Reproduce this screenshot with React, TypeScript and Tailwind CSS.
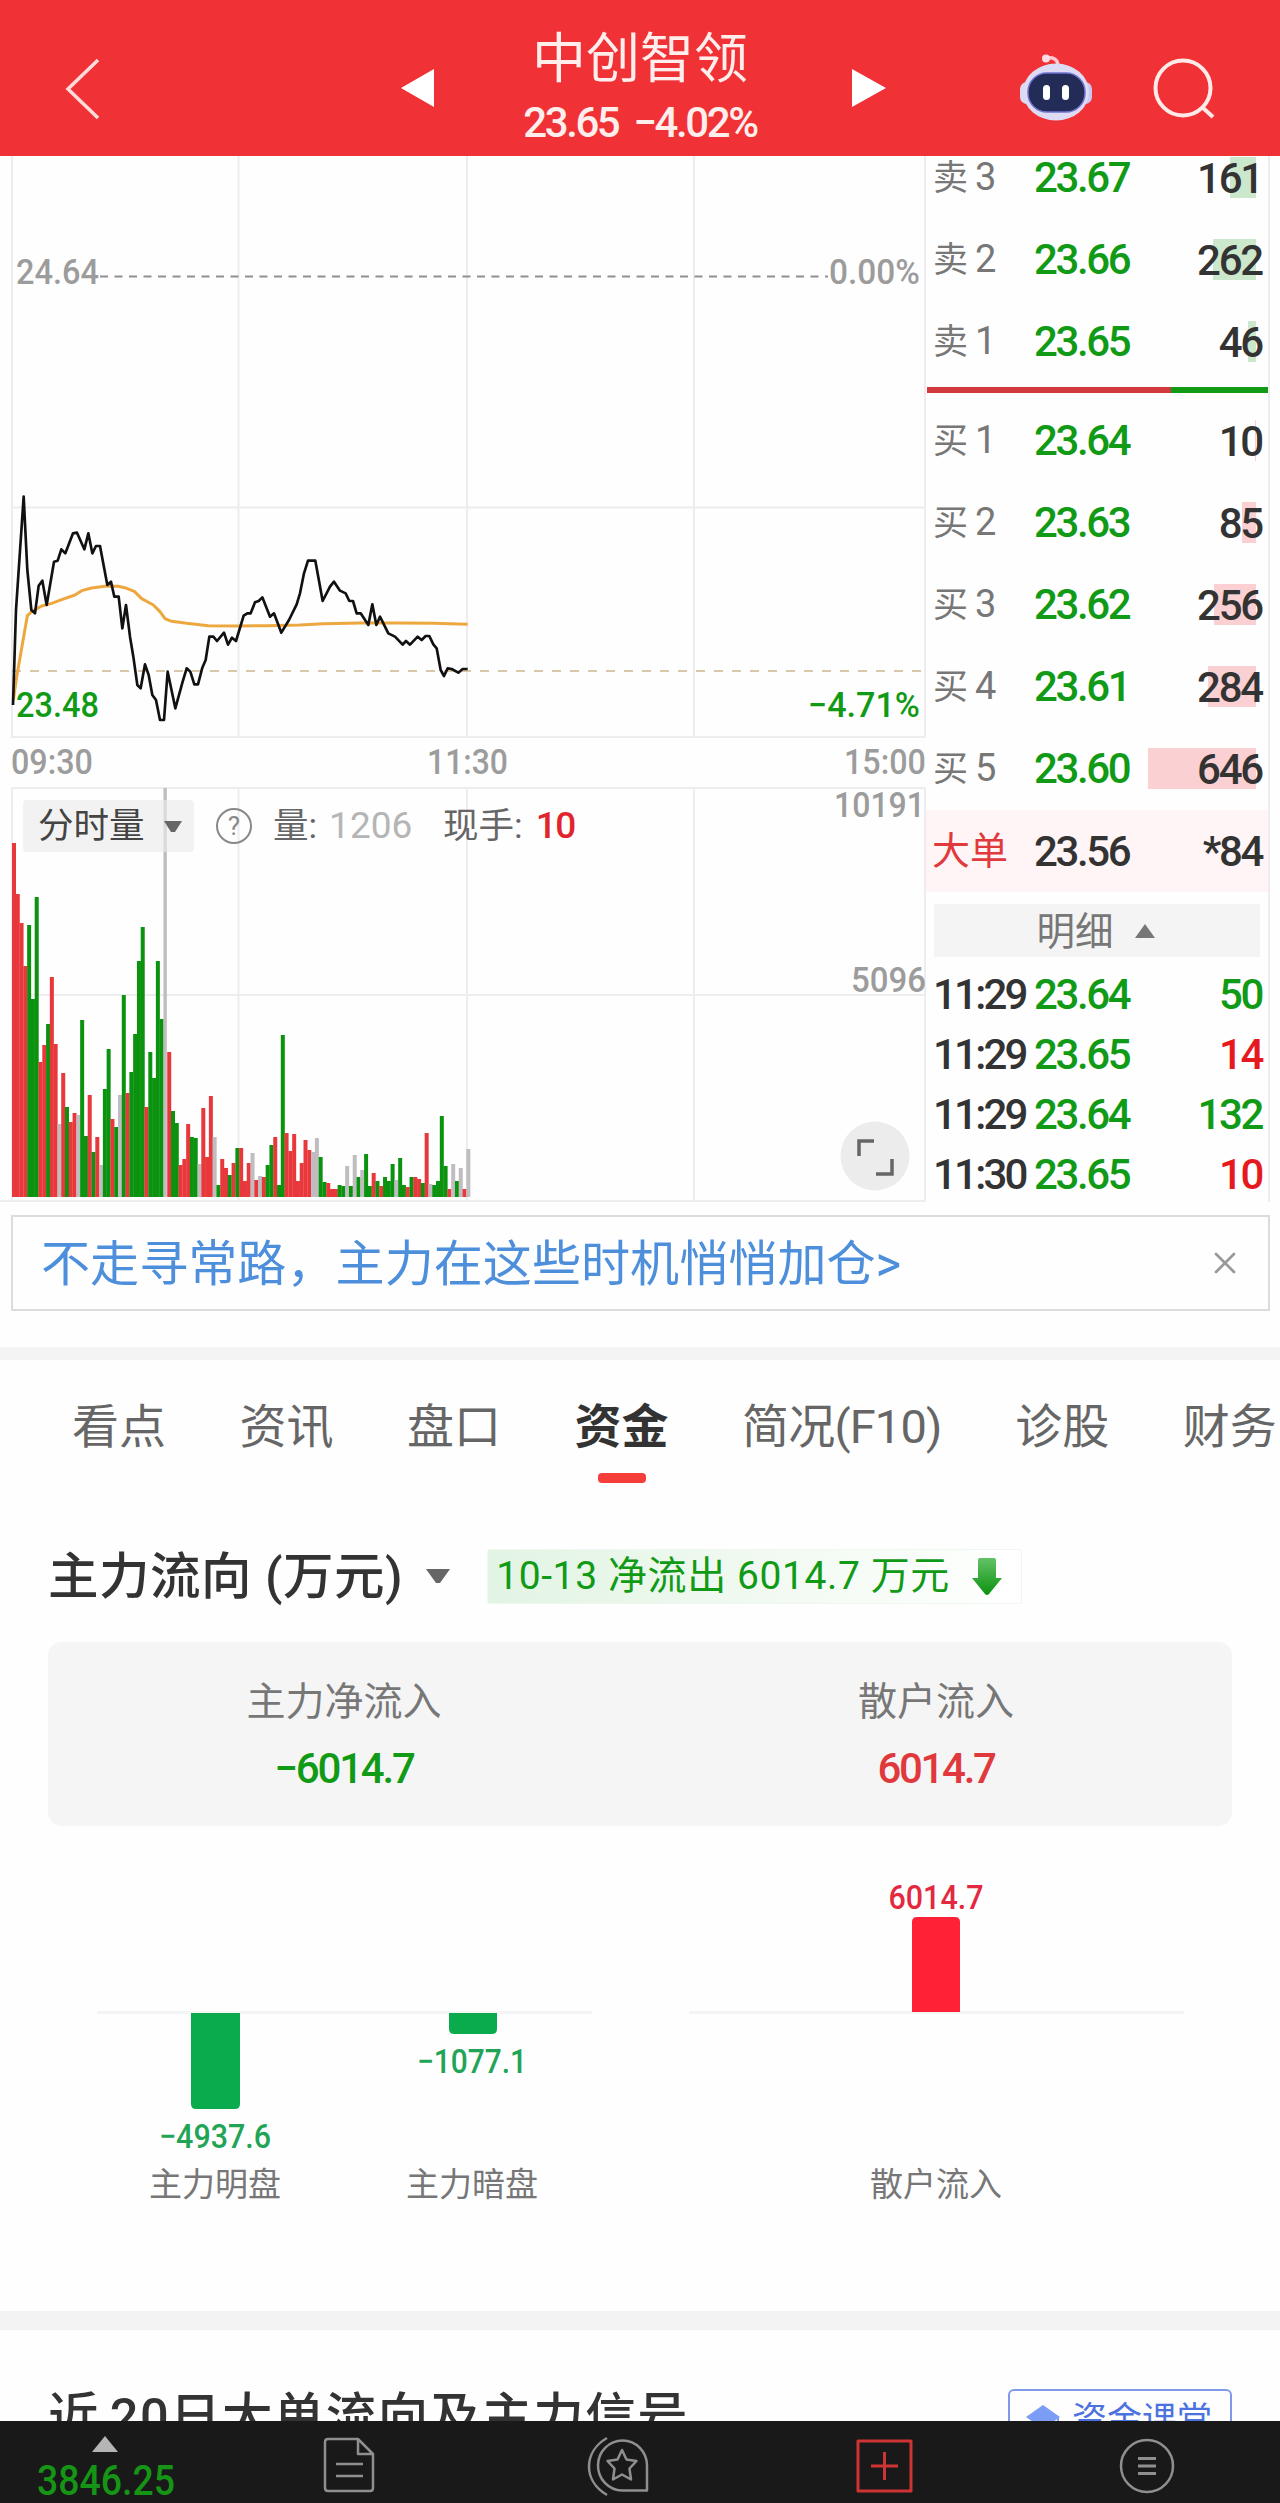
import { clsx } from "clsx"
import { X } from "lucide-react"

interface Level {
  label: string
  price: string
  volume: string
  depth: number
}

interface Tick {
  time: string
  price: string
  volume: string
  up: boolean
}

const sells: Level[] = [
  { label: "卖", price: "23.67", volume: "161", depth: 26 },
  { label: "卖", price: "23.66", volume: "262", depth: 43 },
  { label: "卖", price: "23.65", volume: "46", depth: 8 },
]

const buys: Level[] = [
  { label: "买", price: "23.64", volume: "10", depth: 1 },
  { label: "买", price: "23.63", volume: "85", depth: 14 },
  { label: "买", price: "23.62", volume: "256", depth: 42 },
  { label: "买", price: "23.61", volume: "284", depth: 48 },
  { label: "买", price: "23.60", volume: "646", depth: 108 },
]

const ticks: Tick[] = [
  { time: "11:29", price: "23.64", volume: "50", up: false },
  { time: "11:29", price: "23.65", volume: "14", up: true },
  { time: "11:29", price: "23.64", volume: "132", up: false },
  { time: "11:30", price: "23.65", volume: "10", up: true },
]

const tabs = ["看点", "资讯", "盘口", "资金", "简况(F10)", "诊股", "财务"]

// r = up, g = down, n = unchanged; the number is the bar height
const volumes =
  "r354 r303 r274 r231 g272 g198 g300 r135 r152 g173 r220 r153 n73 r124 g90 r75 r84 n82 g177 g61 r102 g45 r60 n32 " +
  "g108 g148 r78 g70 n102 g202 r104 g125 g163 g236 g270 r90 g145 g119 g236 g178 n409 r145 g86 g74 r32 r38 r73 g60 " +
  "g59 n33 r89 r40 r101 n60 g12 r38 r29 g22 r34 g49 r49 r16 r34 n44 r17 n21 r20 g32 g52 r60 g12 g162 r64 r46 r63 " +
  "r16 r34 r57 r47 n45 n59 g40 g15 r14 r8 r8 g12 g11 n31 g11 n42 g20 n27 g43 g11 r24 g16 r11 g20 g16 g33 n17 g39 " +
  "g12 r10 g20 r20 r18 g14 r64 n13 g12 g16 g81 g31 r8 n33 g16 n29 r8 n48"

const volumeColors: Record<string, string> = { r: "#e8383b", g: "#0b930f", n: "#bfbdbf" }

const pricePoints =
  "39,705 48,420 71,80 82,300 94,420 105,430 116,347 127,332 140,405 162,275 173,272 184,238 196,250 219,190 231,188 " +
  "253,238 265,190 277,250 288,228 300,228 322,345 333,335 343,380 356,380 367,475 378,405 390,500 400,560 412,645 " +
  "422,655 435,583 446,615 457,675 468,690 480,750 492,750 503,605 526,715 548,635 560,595 571,605 583,643 594,643 " +
  "607,593 617,570 628,500 640,500 651,513 672,488 684,524 696,503 708,513 731,437 742,430 752,430 765,397 776,393 " +
  "787,382 810,440 822,430 844,488 867,450 890,403 900,370 912,310 924,272 946,272 968,393 990,350 1002,335 1020,362 " +
  "1037,370 1048,393 1059,393 1070,430 1082,430 1105,465 1117,403 1129,465 1140,440 1165,490 1185,500 1208,524 " +
  "1218,513 1230,524 1253,500 1265,510 1277,498 1288,498 1300,523 1310,535 1322,600 1332,618 1343,595 1355,597 " +
  "1375,608 1388,597 1403,597"

const averagePoints =
  "40,690 50,620 65,535 82,437 95,425 125,408 155,400 185,389 225,375 245,362 275,354 320,348 355,349 380,355 403,364 " +
  "425,386 460,405 480,425 495,446 515,454 560,460 625,467 715,468 800,467 900,465 970,461 1080,459 1200,459 1300,460 1403,463"

interface LabelProps {
  x: number
  y: number
  width: number
  text: string
  className: string
}

function AxisLabel({ x, y, width, text, className }: LabelProps) {
  return (
    <text x={x} y={y} textLength={width} lengthAdjust="spacingAndGlyphs" fontSize="35" className={className}>
      {text}
    </text>
  )
}

function Header() {
  return (
    <header className="relative h-[156px] shrink-0 bg-[#f03237] text-[#ffeeec]">
      <svg className="absolute inset-0" width="1280" height="156" fill="none">
        <path d="M98 60 68 89l30 29" stroke="#ffdcda" strokeWidth="3.5" />
        <path d="M434 69v38l-33-19zM852 69v38l34-19z" fill="#fff" />
        <path d="M1046 59c6-3 12 0 12 7" stroke="#ffc9d3" strokeWidth="3.5" />
        <circle cx="1046" cy="58.5" r="4" fill="#ffdbe3" />
        <rect x="1020" y="82" width="14" height="22" rx="7" fill="#dcd9f2" />
        <rect x="1078" y="82" width="14" height="22" rx="7" fill="#c9c8f2" />
        <ellipse cx="1056" cy="92" rx="33" ry="28.5" fill="#dddcf4" />
        <rect x="1028" y="73" width="57" height="39" rx="19" fill="#222c56" stroke="#6f6fd0" strokeWidth="1.5" />
        <rect x="1043" y="85" width="7" height="15" rx="3.5" fill="#fff" />
        <rect x="1062" y="85" width="7" height="15" rx="3.5" fill="#fff" />
        <circle cx="1183" cy="88" r="27.5" stroke="#ffeae8" strokeWidth="4" />
        <path d="m1202 107 11 10" stroke="#ffeae8" strokeWidth="4" />
      </svg>
      <div className="flex flex-col items-center">
        <h1 className="mt-[31px] text-[54px] leading-[58px] font-normal">中创智领</h1>
        <div className="mt-[12px] text-[42px] leading-[44px] font-medium tracking-[-2.4px] [word-spacing:7px]">
          23.65 −4.02%
        </div>
      </div>
    </header>
  )
}

function PriceChart() {
  return (
    <svg width="926" height="582" viewBox="0 0 926 582" fill="none" className="block overflow-visible">
      <g stroke="#eeecee" strokeWidth="2">
        <path d="M12 0v582M238.500 0v582M467 0v582M694 0v582M925 0v582" />
        <path d="M12 351.500h913M12 581h913" />
      </g>
      <path d="M100 120.500H828" stroke="#8f8f8f" strokeWidth="2" strokeDasharray="8 6.500" />
      <path d="M12 515H925" stroke="#d9c7aa" strokeWidth="2" strokeDasharray="9 9" />
      <g transform="translate(0 314) scale(.33333)">
        <polyline points={averagePoints} stroke="#eda73f" strokeWidth="9" strokeLinejoin="round" />
        <polyline points={pricePoints} stroke="#111" strokeWidth="8" strokeLinejoin="round" />
      </g>
      <AxisLabel x={16} y={128} width={83} text="24.64" className="fill-[#9c9c9c] font-medium" />
      <AxisLabel x={829} y={128} width={91} text="0.00%" className="fill-[#9c9c9c] font-medium" />
      <AxisLabel x={16} y={561} width={83} text="23.48" className="fill-[#119a16] font-medium" />
      <AxisLabel x={808} y={561} width={112} text="−4.71%" className="fill-[#119a16] font-medium" />
    </svg>
  )
}

function TimeAxis() {
  return (
    <svg width="926" height="50" className="block overflow-visible">
      <AxisLabel x={11} y={36} width={82} text="09:30" className="fill-[#9c9c9c] font-medium" />
      <AxisLabel x={427} y={36} width={81} text="11:30" className="fill-[#9c9c9c] font-medium" />
      <AxisLabel x={844} y={36} width={82} text="15:00" className="fill-[#9c9c9c] font-medium" />
    </svg>
  )
}

function VolumeChart() {
  return (
    <div className="relative">
      <svg width="926" height="414" viewBox="0 0 926 414" fill="none" className="block overflow-visible">
        <g stroke="#eeecee" strokeWidth="2">
          <path d="M12 0v414M238.500 0v414M467 0v414M694 0v414M925 0v414" />
          <path d="M12 0h913M12 207h913M0 413h926" />
        </g>
        {volumes.split(" ").map((bar, i) => {
          const height = Number(bar.slice(1))
          return (
            <rect
              key={i}
              x={12 + i * 3.786}
              y={409 - height}
              width={i === 40 ? 3.4 : 4}
              height={height}
              fill={volumeColors[bar[0]]}
            />
          )
        })}
        <AxisLabel x={834} y={29} width={91} text="10191" className="fill-[#9c9c9c] font-medium" />
        <AxisLabel x={851} y={204} width={75} text="5096" className="fill-[#9c9c9c] font-medium" />
        <circle cx="875" cy="368" r="34.500" fill="#ececec" />
        <path d="M874 353h-15v15M876 386h16v-15" stroke="#666" strokeWidth="3.500" />
      </svg>
      <div className="absolute top-[12px] left-[23px] flex h-[52px] items-center text-[35.500px] text-[#666] whitespace-nowrap">
        <div className="flex h-full w-[171px] items-center justify-between rounded-sm bg-[#ebebeb]/65 pt-[2px] pr-[12px] pl-[15px] text-[#444]">
          分时量
          <svg width="18" height="12">
            <path d="M0 0h18l-7 11h-4z" fill="#666" />
          </svg>
        </div>
        <svg width="38" height="38" fill="none" className="ml-[21px]">
          <circle cx="19" cy="19" r="17" stroke="#888" strokeWidth="2" />
          <text x="19" y="28" textAnchor="middle" fontSize="26" fill="#888">
            ?
          </text>
        </svg>
        <span className="ml-[20px] pt-[2px]">量:</span>
        <span className="ml-[12px] w-[84px] text-[37px] text-[#b5b5b5]">1206</span>
        <span className="ml-[30px] pt-[2px]">现手:</span>
        <span className="ml-[13px] text-[37px] font-medium tracking-[-1.5px] text-[#e0262c]">10</span>
      </div>
    </div>
  )
}

function LevelRow({ level, index, side, className }: { level: Level; index: number; side: "buy" | "sell"; className: string }) {
  return (
    <div className={clsx("flex items-center pr-[6px] pl-[7px] text-[42px] leading-[41px]", className)}>
      <span className="w-[101px] pt-[2px] text-[35px] text-[#777]">
        {level.label}
        <span className="ml-[7px] text-[38px]">{index}</span>
      </span>
      <span className="pt-px font-medium tracking-[-2.4px] text-[#119a16]">{level.price}</span>
      <div className="relative ml-auto h-[41px] font-medium tracking-[-2.2px] text-[#333]">
        <div
          className={clsx("absolute top-0 right-[6px] h-full", side === "sell" ? "bg-[#cbe8cc]" : "bg-[#fad0d2]")}
          style={{ width: level.depth }}
        />
        <span className="relative top-px">{level.volume}</span>
      </div>
    </div>
  )
}

function OrderBook() {
  return (
    <aside className="flex w-[344px] flex-col border-r-2 border-[#eeecee]">
      {sells.map((level, i) => (
        <LevelRow
          key={level.price}
          level={level}
          index={3 - i}
          side="sell"
          className={i === 0 ? "h-[62px] shrink-0 pb-[20px]" : "h-[82px] shrink-0"}
        />
      ))}
      <div className="mt-[5px] mb-[6px] ml-px flex h-[6px] shrink-0">
        <div className="w-[244px] bg-[#d23a40]" />
        <div className="flex-1 bg-[#119a16]" />
      </div>
      {buys.map((level, i) => (
        <LevelRow key={level.price} level={level} index={i + 1} side="buy" className="h-[82px] shrink-0" />
      ))}
      <div className="mt-px flex h-[82px] shrink-0 items-center bg-[#fff5f6] pr-[6px] pl-[6px] text-[42px] font-medium tracking-[-2.4px] text-[#333]">
        <span className="w-[102px] text-[38px] font-normal tracking-normal text-[#e03a3c]">大单</span>
        <span>23.56</span>
        <span className="ml-auto">*84</span>
      </div>
      <div className="mr-[8px] ml-[8px] mt-[12px] mb-[7px] flex h-[53px] shrink-0 items-center justify-center bg-[#f4f4f4] pr-[3px] text-[38.500px] text-[#777]">
        <span className="pt-[2px]">明细</span>
        <svg width="20" height="14" className="ml-[21px]">
          <path d="M10 0l10 14H0z" fill="#777" />
        </svg>
      </div>
      {ticks.map((tick, i) => (
        <div
          key={i}
          className="flex h-[60px] shrink-0 items-center pr-[6px] pl-[7px] text-[42px] font-medium tracking-[-2.4px] text-[#333]"
        >
          <span className="w-[101px] tracking-[-2.8px]">{tick.time}</span>
          <span className="text-[#119a16]">{tick.price}</span>
          <span className={clsx("ml-auto", tick.up ? "text-[#e51a1e]" : "text-[#119a16]")}>{tick.volume}</span>
        </div>
      ))}
    </aside>
  )
}

function Banner() {
  return (
    <div className="mr-[10px] ml-[11px] mt-[13px] flex h-[96px] shrink-0 items-center justify-between border-2 border-[#d9dddd] pr-[25px] pl-[28px]">
      <span className="pt-[3px] text-[49.100px] leading-none text-[#4e8fdc]">不走寻常路，主力在这些时机悄悄加仓&gt;</span>
      <X size={36} strokeWidth={1.8} color="#999" />
    </div>
  )
}

function Tabs() {
  return (
    <nav className="flex h-[130px] shrink-0 gap-[73.500px] overflow-hidden pl-[72px] text-[47px] whitespace-nowrap text-[#666]">
      {tabs.map((tab) => (
        <div key={tab} className="flex shrink-0 flex-col items-center">
          <span
            className={clsx(
              "mt-[37px] leading-[60px]",
              tab === "资金" && "font-bold text-[#333]",
              tab === "简况(F10)" && "tracking-[-0.8px]"
            )}
          >
            {tab}
          </span>
          {tab === "资金" && <div className="mt-[16px] h-[10px] w-[48px] rounded-[4px] bg-[#f53d3a]" />}
        </div>
      ))}
    </nav>
  )
}

function FlowSummary() {
  return (
    <section className="shrink-0">
      <div className="mt-[56px] flex h-[60px] items-center pl-[48px]">
        <h2 className="pt-[2px] text-[50.500px] leading-none font-medium tracking-[0.5px] text-[#333]">主力流向 (万元)</h2>
        <svg width="24" height="15" className="ml-[23px]">
          <path d="M0 0h24l-10 14h-4z" fill="#666" />
        </svg>
        <div className="ml-[37px] flex h-[55px] w-[535px] items-center rounded-[3px] border border-[#eef8ee] bg-gradient-to-r from-[#e2f4e3] to-white pl-[8px] text-[39px] leading-none tracking-[0.6px] whitespace-nowrap text-[#119a16]">
          10-13 净流出 6014.7 万元
          <svg width="30" height="37" className="ml-[22px]">
            <defs>
              <linearGradient id="arrow" x1="0" y1="0" x2="0" y2="1">
                <stop offset="0" stopColor="#63c267" />
                <stop offset="1" stopColor="#0b930f" />
              </linearGradient>
            </defs>
            <path d="M8 0h14q2 0 2 2v18h6L17 36q-2 2-4 0L0 20h6V2q0-2 2-2z" fill="url(#arrow)" />
          </svg>
        </div>
      </div>
      <div className="mx-[48px] mt-[36px] grid h-[184px] grid-cols-2 rounded-[14px] bg-[#f5f5f5] text-center">
        <div className="flex flex-col">
          <span className="mt-[37px] text-[39px] leading-[46px] text-[#777]">主力净流入</span>
          <span className="mt-[21px] text-[42px] leading-[46px] font-medium tracking-[-2.2px] text-[#119a16]">−6014.7</span>
        </div>
        <div className="flex flex-col">
          <span className="mt-[37px] text-[39px] leading-[46px] text-[#777]">散户流入</span>
          <span className="mt-[21px] text-[42px] leading-[46px] font-medium tracking-[-2.3px] text-[#e0393d]">6014.7</span>
        </div>
      </div>
    </section>
  )
}

function FlowChart() {
  return (
    <svg width="1280" height="485" viewBox="0 0 1280 485" className="block shrink-0" textAnchor="middle">
      <path d="M97 186.500h495M689 186.500h495" stroke="#f4f4f4" strokeWidth="3" />
      <path d="M191 187h49v91q0 5-5 5h-39q-5 0-5-5zM449 187h48v16q0 5-5 5h-38q-5 0-5-5z" fill="#0aab4c" />
      <path d="M912 186V96q0-5 5-5h38q5 0 5 5v90z" fill="#ff2236" />
      <g fontSize="34" className="font-medium">
        <text x="215" y="322" textLength="112" lengthAdjust="spacingAndGlyphs" fill="#22a457">−4937.6</text>
        <text x="472" y="247" textLength="110" lengthAdjust="spacingAndGlyphs" fill="#22a457">−1077.1</text>
        <text x="936" y="83" textLength="95" lengthAdjust="spacingAndGlyphs" fill="#e3283f">6014.7</text>
      </g>
      <g fontSize="33" fill="#777">
        <text x="215" y="370">主力明盘</text>
        <text x="472" y="370">主力暗盘</text>
        <text x="936" y="370">散户流入</text>
      </g>
    </svg>
  )
}

function SignalSection() {
  return (
    <section className="flex h-[91px] shrink-0 items-start justify-between overflow-hidden pr-[48px] pl-[48px]">
      <h2 className="mt-[57px] text-[50.500px] leading-[60px] font-medium tracking-[1.400px] whitespace-nowrap text-[#333] [word-spacing:-4px]">
        近 20日大单流向及主力信号
      </h2>
      <button className="mt-[59px] flex h-[64px] w-[224px] shrink-0 items-start rounded-[6px] border-2 border-[#8199e6] pl-[16px] text-[35px] text-[#4c72df]">
        <svg width="34" height="30" className="mt-[14px] mr-[12px]">
          <path d="M17 0l17 12-17 12L0 12z" fill="#7c9df5" />
          <path d="M7 18v8q10 6 20 0v-8l-10 7zM32 12v14" fill="#7c9df5" stroke="#7c9df5" strokeWidth="2" />
        </svg>
        <span className="mt-[10px] leading-[40px]">资金课堂</span>
      </button>
    </section>
  )
}

function BottomBar() {
  return (
    <footer className="relative h-[82px] shrink-0 bg-[#191919]">
      <svg width="1280" height="82" fill="none" stroke="#8f8f8f" strokeWidth="2.500" strokeLinejoin="round">
        <path d="M105 15l13 16H92z" fill="#b5b5b5" stroke="none" />
        <path d="M358 18h-30q-3 0-3 3v46q0 3 3 3h42q3 0 3-3V33zv15h15M336 43h27M336 55h27" />
        <path d="M607 17c-24 14-24 43 0 57M647 69.500h-25a24.500 25 0 1 1 25-25z" />
        <path d="M622 29l4.500 9.500 10 1.500-7 7.500 1.500 11-9-5-9 5 1.500-11-7-7.500 10-1.500z" />
        <path d="M858 20h53v50h-53zM871 45h27M884.500 31v28" stroke="#cf3434" strokeWidth="3" />
        <ellipse cx="1147" cy="45" rx="26" ry="26" />
        <path d="M1138 37.500h18M1138 45h18M1138 52.500h18" strokeWidth="3" />
        <text x="37" y="74" textLength="138" lengthAdjust="spacingAndGlyphs" fontSize="42" stroke="none" className="fill-[#169416] font-medium">
          3846.25
        </text>
      </svg>
    </footer>
  )
}

export default function App() {
  return (
    <div className="flex h-[2503px] w-[1280px] flex-col overflow-hidden bg-[#fefefe] font-[Roboto,'Noto_Sans_CJK_SC',sans-serif]">
      <Header />
      <main className="flex h-[1046px] shrink-0 overflow-hidden">
        <div className="w-[926px] shrink-0">
          <PriceChart />
          <TimeAxis />
          <VolumeChart />
        </div>
        <OrderBook />
      </main>
      <Banner />
      <div className="mt-[36px] h-[13px] shrink-0 bg-[#f4f4f4]" />
      <Tabs />
      <FlowSummary />
      <FlowChart />
      <div className="h-[19px] shrink-0 bg-[#f3f3f3]" />
      <SignalSection />
      <BottomBar />
    </div>
  )
}
